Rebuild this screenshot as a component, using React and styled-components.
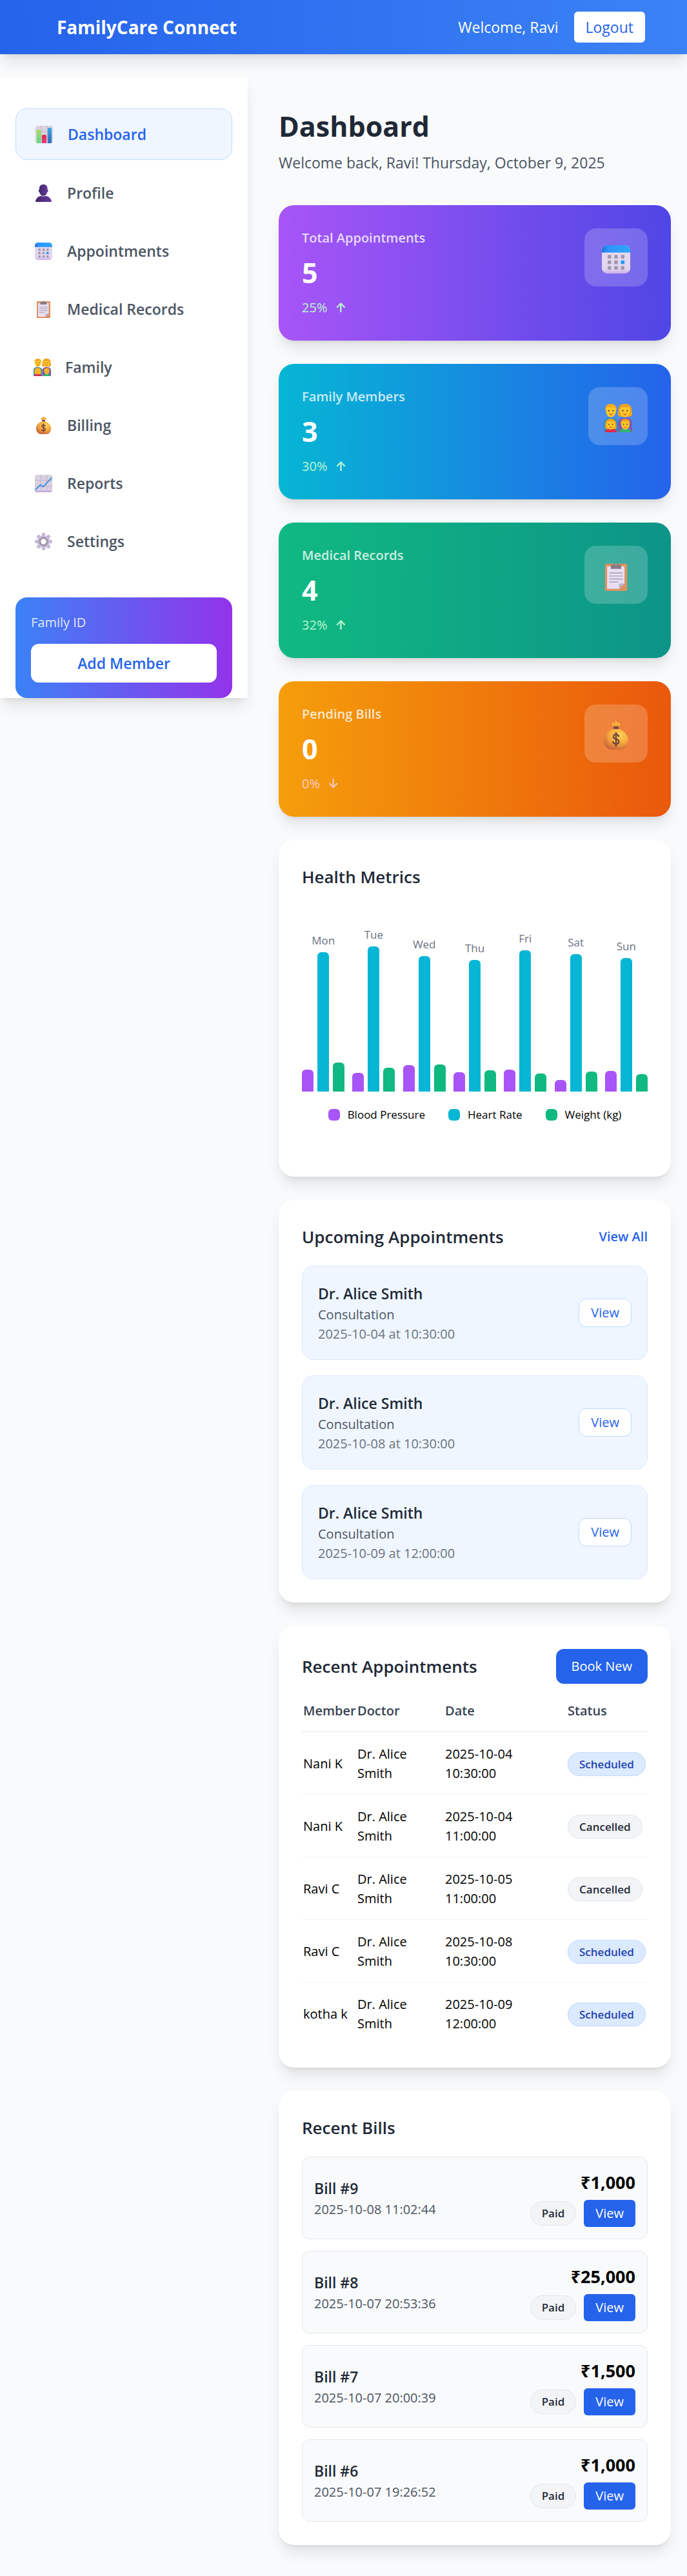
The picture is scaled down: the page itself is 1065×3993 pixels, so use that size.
import React, { useId } from "react";
import styled, { createGlobalStyle, css } from "styled-components";

const GlobalStyle = createGlobalStyle`
  *, *::before, *::after { box-sizing: border-box; }
  body {
    margin: 0;
    background: #f9fafb;
    color: #000;
    font-family: "Open Sans", "Noto Sans", sans-serif;
    font-size: 23px;
    line-height: 36px;
  }
  h1, h2, h3, p, ul { margin: 0; padding: 0; }
  ul { list-style: none; }
  button { font: inherit; border: 0; cursor: pointer; }
  a { text-decoration: none; }
`;

const shadow = css`
  box-shadow: 0 15px 22px -4px rgba(0, 0, 0, 0.1), 0 6px 9px -6px rgba(0, 0, 0, 0.1);
`;

/* ---------- icons ---------- */

const Svg = styled.svg`
  display: block;
  width: ${(p) => p.$size}px;
  height: ${(p) => p.$size}px;
`;

function ChartBarIcon({ size }) {
  const id = useId();
  return (
    <Svg $size={size} viewBox="0 0 27 27" aria-hidden="true">
      <defs>
        <linearGradient id={id + "g"} x2="0" y2="1"><stop stopColor="#a8e05f" /><stop offset="1" stopColor="#5fd98a" /></linearGradient>
        <linearGradient id={id + "p"} x2="0" y2="1"><stop stopColor="#d62a55" /><stop offset="1" stopColor="#f03a86" /></linearGradient>
        <linearGradient id={id + "b"} x2="0" y2="1"><stop stopColor="#3fa5e8" /><stop offset="1" stopColor="#2a6fbe" /></linearGradient>
      </defs>
      <rect width="27" height="27" rx="3" fill="#dad2de" />
      <path d="M9 0v27M18.500 0v27M0 8.500h27M0 18h27" stroke="#bfb6c6" strokeWidth="1" />
      <path d="M2 27V7.500a1.500 1.500 0 0 1 1.500-1.500h3.500a1.500 1.500 0 0 1 1.500 1.500V27z" fill={`url(#${id}g)`} />
      <path d="M10 27V15.500a1.500 1.500 0 0 1 1.500-1.500h4a1.500 1.500 0 0 1 1.500 1.500V27z" fill={`url(#${id}p)`} />
      <path d="M19 27V4.500a1.500 1.500 0 0 1 1.500-1.500h3a1.500 1.500 0 0 1 1.500 1.500V27z" fill={`url(#${id}b)`} />
    </Svg>
  );
}

function PersonIcon({ size }) {
  const id = useId();
  return (
    <Svg $size={size} viewBox="0 0 27 27" aria-hidden="true">
      <defs>
        <linearGradient id={id} x2="1" y2="0"><stop stopColor="#43276b" /><stop offset="1" stopColor="#63399b" /></linearGradient>
      </defs>
      <path d="M13.500 0c-4.500 0-6.500 2.400-6.500 6v2c-.9 0-1.300.7-1.300 1.700S6.300 11.500 7.100 11.500c.6 3.500 3 6.300 6.100 6.300s5.500-2.800 6.100-6.300c.8 0 1.400-.8 1.400-1.800S20.300 8 19.500 8V6c0-3.600-1.800-6-6-6z" fill={`url(#${id})`} />
      <path d="M1 27c.4-5.500 4.400-9.300 9-9.300 1.500 1 5 1 6.500 0 4.600 0 9 3.800 9.500 9.300z" fill={`url(#${id})`} />
    </Svg>
  );
}

function CalendarIcon({ size }) {
  const id = useId();
  const cells = [];
  for (let r = 0; r < 3; r += 1) {
    for (let c = 0; c < 3; c += 1) {
      cells.push(
        <rect key={`${r}${c}`} x={5.500 + c * 6.300} y={9.300 + r * 5.300} width="3.400" height="3.400" rx="0.400"
          fill={r === 1 && c === 2 ? "#2496f5" : "#9f97ae"} />
      );
    }
  }
  return (
    <Svg $size={size} viewBox="0 0 27 27" aria-hidden="true">
      <defs>
        <linearGradient id={id + "t"} x2="1" y2="0"><stop stopColor="#1f70dc" /><stop offset=".2" stopColor="#2d93fb" /><stop offset="1" stopColor="#2fa6fc" /></linearGradient>
        <linearGradient id={id + "b"} x2="0" y2="1"><stop stopColor="#e4dcec" /><stop offset=".85" stopColor="#e1d4ee" /><stop offset="1" stopColor="#cba9e4" /></linearGradient>
      </defs>
      <rect width="27" height="27" rx="5" fill={`url(#${id}b)`} />
      <path d="M0 7V5a5 5 0 0 1 5-5h17a5 5 0 0 1 5 5v2z" fill={`url(#${id}t)`} />
      {cells}
    </Svg>
  );
}

function ClipboardIcon({ size }) {
  return (
    <Svg $size={size} viewBox="0 0 27 27" aria-hidden="true">
      <rect x="3" y="1" width="21" height="26" rx="1" fill="#dd935f" />
      <path d="M5.500 3.500h16v16.500l-5 5h-11a.5.5 0 0 1-.5-.5V4a.5.500 0 0 1 .5-.5z" fill="#e9dff2" />
      <path d="M21.800 20h-4.500a1 1 0 0 0-1 1v4.200z" fill="#bfb2cf" />
      <path d="M8.500 6V3.300c0-.8.6-1.300 1.400-1.300h1.700a2 2 0 0 1 3.800 0H17c.8 0 1.400.5 1.400 1.300V6z" fill="#857b85" />
      <circle cx="13.500" cy="2.100" r=".8" fill="#dd935f" />
      <path d="M7 10h13M7 12.800h13M7 15.600h13M7 18.400h8.500" stroke="#a79cb2" strokeWidth=".9" />
    </Svg>
  );
}

function Face({ x, y, s, hair, long }) {
  return (
    <g transform={`translate(${x} ${y}) scale(${s})`}>
      {long && <path d="M-7 0c0-5 2.500-7.200 7-7.200s7 2.200 7 7.200c.8 3.500.3 6-2 6H-5c-2.300 0-2.800-2.500-2-6z" fill={hair} />}
      <path d="M-5.300-1c0-3 2-5 5.300-5s5.300 2 5.300 5c0 4-2 7.500-5.300 7.500S-5.300 3-5.300-1z" fill="#ffc928" />
      <path d="M-5.800-.5c-.6-4 1.600-6.700 5.800-6.700s6.400 2.700 5.800 6.700c-1-1.200-1.600-2.600-2-3.700-2.600.9-5.400.9-7.600 0-.4 1.100-1 2.500-2 3.700z" fill={hair} />
      <circle cx="-2.200" cy="-.2" r=".8" fill="#5b3a3c" />
      <circle cx="2.200" cy="-.2" r=".8" fill="#5b3a3c" />
      <path d="M-1.600 3c1 .8 2.200.8 3.200 0-.2 1.500-3 1.500-3.200 0z" fill="#d9304f" stroke="#d9304f" strokeWidth=".4" />
    </g>
  );
}

function FamilyIcon({ size }) {
  return (
    <Svg $size={size} viewBox="0 0 27 27" aria-hidden="true">
      <path d="M0 27V18c0-3 2-5 6-5s7.500 1.500 7.500 5v9z" fill="#2b8fc6" />
      <path d="M13.500 27v-9c0-3.500 3-5 7-5s6.500 2 6.500 5v9z" fill="#7d5ab0" />
      <Face x={6.800} y={6.700} s={0.920} hair="#f5a91c" />
      <Face x={20.200} y={6.700} s={0.920} hair="#f0a020" long />
      <path d="M1 27c.3-2.500 2.500-3.600 5.700-3.600s5.600 1.100 5.900 3.600z" fill="#e2284c" />
      <path d="M14.700 27c.3-2.500 2.500-3.600 5.700-3.600s5.400 1.100 5.700 3.600z" fill="#2fb573" />
      <Face x={6.600} y={19.600} s={0.740} hair="#f3a41c" long />
      <Face x={20.500} y={19.600} s={0.740} hair="#f0a020" />
    </Svg>
  );
}

function MoneyBagIcon({ size }) {
  const id = useId();
  return (
    <Svg $size={size} viewBox="0 0 27 27" aria-hidden="true">
      <defs>
        <radialGradient id={id} cx=".62" cy=".3" r=".75"><stop stopColor="#ffd858" /><stop offset=".55" stopColor="#f5a83c" /><stop offset="1" stopColor="#c9603c" /></radialGradient>
      </defs>
      <path d="M10.300 4.800C10 3.400 9 2.500 9.800 1.600c.7-.7 1.600.2 2.300-.6.500-.7.800-1 1.500-1s1 .3 1.500 1c.7.800 1.600-.1 2.300.6.800.9-.2 1.800-.5 3.200z" fill="#f5ad3d" />
      <path d="M10 7.500c-4.500 2-8 6-8 10.800C2 24 6 27 10 27h7.300c4 0 7.900-3 7.900-8.700 0-4.800-3.700-8.800-8.200-10.800z" fill={`url(#${id})`} />
      <rect x="11" y="4.800" width="5" height="2.600" rx=".6" fill="#7a4a44" />
      <path d="M16 14.300c-.4-1.200-1.300-1.800-2.500-1.800-1.500 0-2.500.8-2.500 2.200 0 3 5.200 1.600 5.200 4.700 0 1.500-1.200 2.300-2.700 2.300s-2.500-.8-2.900-2M13.500 11v12.800" fill="none" stroke="#75463f" strokeWidth="1.500" strokeLinecap="round" />
    </Svg>
  );
}

function ChartLineIcon({ size }) {
  const id = useId();
  return (
    <Svg $size={size} viewBox="0 0 27 27" aria-hidden="true">
      <defs>
        <linearGradient id={id} x2="0" y2="1"><stop stopColor="#d8d1de" /><stop offset=".88" stopColor="#dccfe6" /><stop offset="1" stopColor="#b597cf" /></linearGradient>
      </defs>
      <rect width="27" height="27" rx="3" fill={`url(#${id})`} />
      <path d="M9 0v27M18.500 0v27M0 8.500h27M0 18h27" stroke="#bfb6c6" strokeWidth="1" />
      <path d="M.5 23.500 8.700 15.500l4 3L26.500 4.500" fill="none" stroke="#3a95dc" strokeWidth="1.800" />
    </Svg>
  );
}

function GearIcon({ size }) {
  const teeth = [0, 45, 90, 135, 180, 225, 270, 315];
  return (
    <Svg $size={size} viewBox="0 0 27 27" aria-hidden="true">
      {teeth.map((a) => (
        <rect key={a} x="10.700" y="0" width="5.600" height="9" rx="2.200" fill="#c6b9d6" transform={`rotate(${a} 13.500 13.500)`} />
      ))}
      <circle cx="13.500" cy="13.500" r="9.600" fill="#c9bdd8" />
      <circle cx="13.500" cy="13.500" r="5.700" fill="#fff" stroke="#9f94a9" strokeWidth="3" />
    </Svg>
  );
}

/* ---------- header ---------- */

const Header = styled.header`
  display: flex;
  align-items: center;
  justify-content: space-between;
  padding: 18px 65px 18px 88px;
  background: linear-gradient(90deg, #2563eb, #3b82f6);
  color: #fff;
  ${shadow}
`;

const Brand = styled.div`
  font-size: 28px;
  line-height: 42px;
  font-weight: 700;
`;

const Account = styled.div`
  display: flex;
  align-items: center;
  gap: 24px;
`;

const LogoutButton = styled.button`
  padding: 6px 18px;
  border-radius: 6px;
  background: #fff;
  color: #2563eb;
`;

/* ---------- sidebar ---------- */

const Layout = styled.div`
  display: flex;
  align-items: flex-start;
`;

const Sidebar = styled.aside`
  flex: 0 0 384px;
  margin-top: 36px;
  padding: 48px 24px 0;
  background: #fff;
  ${shadow}
`;

const NavList = styled.ul`
  display: flex;
  flex-direction: column;
  gap: 12px;
`;

const NavLink = styled.a`
  display: flex;
  align-items: center;
  gap: 18px;
  padding: 18px 24px;
  border-radius: 18px;
  line-height: 42px;
  font-weight: 600;
  color: #4b5563;
  ${(p) => p.$active && css`
    border: 1px solid #bfdbfe;
    background: #eff6ff;
    color: #2563eb;
  `}
`;

const NavIcon = styled.span`
  display: flex;
  justify-content: center;
  width: ${(p) => (p.$narrow ? 35 : 38)}px;
`;

const FamilyBox = styled.section`
  display: flex;
  flex-direction: column;
  gap: 18px;
  margin-top: 48px;
  padding: 24px;
  border-radius: 18px;
  background: linear-gradient(90deg, #3b82f6, #9333ea);
`;

const FamilyLabel = styled.p`
  font-size: 20px;
  line-height: 30px;
  color: rgba(255, 255, 255, 0.85);
`;

const AddButton = styled.button`
  padding: 12px;
  border-radius: 12px;
  background: #fff;
  color: #2563eb;
  font-weight: 600;
`;

/* ---------- main ---------- */

const Main = styled.main`
  flex: 1;
  min-width: 0;
  display: flex;
  flex-direction: column;
  gap: 48px;
  padding: 84px 25px 48px 48px;
`;

const PageHead = styled.div`
  display: flex;
  flex-direction: column;
  gap: 10px;
`;

const PageTitle = styled.h1`
  font-size: 43px;
  line-height: 56px;
  font-weight: 700;
  color: #1f2937;
`;

const PageSubtitle = styled.p`
  color: #4b5563;
`;

const Stack = styled.div`
  display: flex;
  flex-direction: column;
  gap: 36px;
`;

const StatCard = styled.section`
  display: flex;
  justify-content: space-between;
  align-items: flex-start;
  padding: 36px;
  border-radius: 24px;
  background: linear-gradient(90deg, ${(p) => p.$from}, ${(p) => p.$to});
  color: #fff;
  ${shadow}
`;

const StatInfo = styled.div`
  display: flex;
  flex-direction: column;
  gap: 12px;
`;

const StatLabel = styled.h3`
  font-size: 20px;
  line-height: 30px;
  font-weight: 600;
  color: rgba(255, 255, 255, 0.8);
`;

const StatValue = styled.p`
  font-size: 43px;
  line-height: 54px;
  font-weight: 700;
`;

const Trend = styled.p`
  display: flex;
  gap: 12px;
  font-size: 20px;
  line-height: 30px;
  color: ${(p) => (p.$down ? "#fecaca" : "#bbf7d0")};
`;

const Arrow = styled.span`
  font-family: Inter, sans-serif;
  font-weight: 600;
`;

const StatIcon = styled.div`
  display: flex;
  align-items: center;
  justify-content: center;
  width: ${(p) => (p.$narrow ? 92 : 98)}px;
  height: 90px;
  padding-top: 6px;
  border-radius: 18px;
  background: rgba(255, 255, 255, 0.2);
`;

const Card = styled.section`
  padding: 36px;
  border-radius: 24px;
  background: #fff;
  ${shadow}
`;

const CardHead = styled.div`
  display: flex;
  align-items: center;
  justify-content: space-between;
  margin-bottom: 24px;
`;

const CardTitle = styled.h2`
  font-size: 26px;
  line-height: 42px;
  font-weight: 600;
  color: #1f2937;
`;

/* ---------- chart ---------- */

const Chart = styled.div`
  height: 384px;
`;

const Plot = styled.div`
  display: flex;
  align-items: flex-end;
  gap: 12px;
  height: 288px;
`;

const Day = styled.div`
  flex: 1;
  display: flex;
  flex-direction: column;
  align-items: center;
  gap: 6px;
  font-size: 17px;
  line-height: 24px;
  color: #6b7280;
`;

const Bars = styled.div`
  display: flex;
  align-items: flex-end;
  gap: 6px;
`;

const Bar = styled.div`
  width: 18px;
  border-radius: 6px 6px 0 0;
  background: ${(p) => p.$color};
`;

const Legend = styled.ul`
  display: flex;
  justify-content: center;
  gap: 36px;
  margin-top: 24px;
  font-size: 17px;
  line-height: 24px;
`;

const LegendItem = styled.li`
  display: flex;
  align-items: center;
  gap: 12px;
  &::before {
    content: "";
    width: 18px;
    height: 18px;
    border-radius: 6px;
    background: ${(p) => p.$color};
  }
`;

/* ---------- appointments ---------- */

const TextLink = styled.a`
  font-size: 20px;
  line-height: 30px;
  font-weight: 600;
  color: #2563eb;
`;

const RowList = styled.ul`
  display: flex;
  flex-direction: column;
  gap: ${(p) => p.$gap}px;
`;

const VisitRow = styled.li`
  display: flex;
  align-items: center;
  justify-content: space-between;
  padding: 24px;
  border: 1px solid #dbeafe;
  border-radius: 18px;
  background: #eff6ff;
`;

const RowTitle = styled.h3`
  font-size: 23px;
  line-height: 36px;
  font-weight: 600;
  color: #1f2937;
`;

const RowText = styled.p`
  font-size: 20px;
  line-height: 30px;
  color: ${(p) => (p.$muted ? "#6b7280" : "#4b5563")};
`;

const OutlineButton = styled.button`
  padding: 6px 18px;
  border: 1px solid #bfdbfe;
  border-radius: 12px;
  background: #fff;
  color: #2563eb;
  font-size: 20px;
  line-height: 30px;
`;

const SolidButton = styled.button`
  padding: ${(p) => (p.$small ? "6px 18px" : "12px 24px")};
  border-radius: ${(p) => (p.$small ? 6 : 12)}px;
  background: #2563eb;
  color: #fff;
  font-size: 20px;
  line-height: 30px;
`;

const Table = styled.table`
  width: 100%;
  table-layout: fixed;
  border-collapse: collapse;
  font-size: 20px;
  line-height: 30px;
  th {
    padding: 3px 0 17px 2px;
    border-bottom: 1px solid #e5e7eb;
    text-align: left;
    font-weight: 600;
    color: #374151;
  }
  td {
    padding: 19px 2px 17px;
    border-bottom: 1px solid #f3f4f6;
  }
  tr:last-child td { border-bottom: 0; }
`;

const Col = styled.col`
  width: ${(p) => p.$width};
`;

const Badge = styled.span`
  padding: 6px 17px;
  border: 1px solid ${(p) => (p.$info ? "#bfdbfe" : "#e5e7eb")};
  border-radius: 999px;
  background: ${(p) => (p.$info ? "#dbeafe" : "#f3f4f6")};
  color: ${(p) => (p.$info ? "#1e40af" : "#1f2937")};
  font-size: 17px;
  line-height: 24px;
  font-weight: 600;
`;

/* ---------- bills ---------- */

const BillRow = styled.li`
  display: flex;
  align-items: center;
  justify-content: space-between;
  padding: 18px;
  border: 1px solid #e5e7eb;
  border-radius: 12px;
  background: #f9fafb;
`;

const BillSide = styled.div`
  display: flex;
  flex-direction: column;
  align-items: flex-end;
  gap: 6px;
`;

const Amount = styled.p`
  font-size: 27px;
  line-height: 42px;
  font-weight: 700;
`;

const BillActions = styled.div`
  display: flex;
  align-items: center;
  gap: 12px;
`;

/* ---------- data ---------- */

const nav = [
  { label: "Dashboard", Icon: ChartBarIcon, active: true },
  { label: "Profile", Icon: PersonIcon },
  { label: "Appointments", Icon: CalendarIcon },
  { label: "Medical Records", Icon: ClipboardIcon },
  { label: "Family", Icon: FamilyIcon, narrow: true },
  { label: "Billing", Icon: MoneyBagIcon },
  { label: "Reports", Icon: ChartLineIcon },
  { label: "Settings", Icon: GearIcon },
];

const stats = [
  { label: "Total Appointments", value: 5, trend: 25, Icon: CalendarIcon, from: "#a855f7", to: "#4f46e5" },
  { label: "Family Members", value: 3, trend: 30, Icon: FamilyIcon, from: "#06b6d4", to: "#2563eb", narrow: true },
  { label: "Medical Records", value: 4, trend: 32, Icon: ClipboardIcon, from: "#10b981", to: "#0d9488" },
  { label: "Pending Bills", value: 0, trend: 0, Icon: MoneyBagIcon, from: "#f59e0b", to: "#ea580c", down: true },
];

const series = [
  { label: "Blood Pressure", color: "#a855f7" },
  { label: "Heart Rate", color: "#06b6d4" },
  { label: "Weight (kg)", color: "#10b981" },
];

const days = [
  { label: "Mon", values: [34, 216, 45] },
  { label: "Tue", values: [29, 225, 37] },
  { label: "Wed", values: [41, 210, 42] },
  { label: "Thu", values: [30, 204, 33] },
  { label: "Fri", values: [34, 219, 28] },
  { label: "Sat", values: [18, 213, 31] },
  { label: "Sun", values: [32, 207, 27] },
];

const upcoming = ["2025-10-04 at 10:30:00", "2025-10-08 at 10:30:00", "2025-10-09 at 12:00:00"];

const recent = [
  { member: "Nani K", date: "2025-10-04", time: "10:30:00", status: "Scheduled" },
  { member: "Nani K", date: "2025-10-04", time: "11:00:00", status: "Cancelled" },
  { member: "Ravi C", date: "2025-10-05", time: "11:00:00", status: "Cancelled" },
  { member: "Ravi C", date: "2025-10-08", time: "10:30:00", status: "Scheduled" },
  { member: "kotha k", date: "2025-10-09", time: "12:00:00", status: "Scheduled" },
];

const bills = [
  { id: 9, date: "2025-10-08 11:02:44", amount: "₹1,000" },
  { id: 8, date: "2025-10-07 20:53:36", amount: "₹25,000" },
  { id: 7, date: "2025-10-07 20:00:39", amount: "₹1,500" },
  { id: 6, date: "2025-10-07 19:26:52", amount: "₹1,000" },
];

export default function App() {
  return (
    <>
      <GlobalStyle />
      <Header>
        <Brand>FamilyCare Connect</Brand>
        <Account>
          <span>Welcome, Ravi</span>
          <LogoutButton type="button">Logout</LogoutButton>
        </Account>
      </Header>
      <Layout>
        <Sidebar>
          <nav>
            <NavList>
              {nav.map(({ label, Icon, active, narrow }) => (
                <li key={label}>
                  <NavLink href="#" $active={active}>
                    <NavIcon $narrow={narrow}><Icon size={27} /></NavIcon>
                    {label}
                  </NavLink>
                </li>
              ))}
            </NavList>
          </nav>
          <FamilyBox>
            <FamilyLabel>Family ID</FamilyLabel>
            <AddButton type="button">Add Member</AddButton>
          </FamilyBox>
        </Sidebar>
        <Main>
          <PageHead>
            <PageTitle>Dashboard</PageTitle>
            <PageSubtitle>Welcome back, Ravi! Thursday, October 9, 2025</PageSubtitle>
          </PageHead>
          <Stack>
            {stats.map(({ label, value, trend, Icon, from, to, narrow, down }) => (
              <StatCard key={label} $from={from} $to={to}>
                <StatInfo>
                  <StatLabel>{label}</StatLabel>
                  <StatValue>{value}</StatValue>
                  <Trend $down={down}>{trend}% <Arrow>{down ? "↓" : "↑"}</Arrow></Trend>
                </StatInfo>
                <StatIcon $narrow={narrow}><Icon size={44} /></StatIcon>
              </StatCard>
            ))}

            <Card>
              <CardHead><CardTitle>Health Metrics</CardTitle></CardHead>
              <Chart>
                <Plot>
                  {days.map((d) => (
                    <Day key={d.label}>
                      {d.label}
                      <Bars>
                        {d.values.map((v, i) => (
                          <Bar key={series[i].label} $color={series[i].color} style={{ height: v }} />
                        ))}
                      </Bars>
                    </Day>
                  ))}
                </Plot>
                <Legend>
                  {series.map((s) => <LegendItem key={s.label} $color={s.color}>{s.label}</LegendItem>)}
                </Legend>
              </Chart>
            </Card>

            <Card>
              <CardHead>
                <CardTitle>Upcoming Appointments</CardTitle>
                <TextLink href="#">View All</TextLink>
              </CardHead>
              <RowList $gap={24}>
                {upcoming.map((when) => (
                  <VisitRow key={when}>
                    <div>
                      <RowTitle>Dr. Alice Smith</RowTitle>
                      <RowText>Consultation</RowText>
                      <RowText $muted>{when}</RowText>
                    </div>
                    <OutlineButton type="button">View</OutlineButton>
                  </VisitRow>
                ))}
              </RowList>
            </Card>

            <Card>
              <CardHead>
                <CardTitle>Recent Appointments</CardTitle>
                <SolidButton type="button">Book New</SolidButton>
              </CardHead>
              <Table>
                <colgroup>
                  <Col $width="84px" />
                  <Col $width="136px" />
                  <Col $width="auto" />
                  <Col $width="126px" />
                </colgroup>
                <thead>
                  <tr>
                    <th scope="col">Member</th>
                    <th scope="col">Doctor</th>
                    <th scope="col">Date</th>
                    <th scope="col">Status</th>
                  </tr>
                </thead>
                <tbody>
                  {recent.map((r) => (
                    <tr key={r.member + r.date + r.time}>
                      <td>{r.member}</td>
                      <td>Dr. Alice Smith</td>
                      <td>{r.date} {r.time}</td>
                      <td><Badge $info={r.status === "Scheduled"}>{r.status}</Badge></td>
                    </tr>
                  ))}
                </tbody>
              </Table>
            </Card>

            <Card>
              <CardHead><CardTitle>Recent Bills</CardTitle></CardHead>
              <RowList $gap={18}>
                {bills.map((b) => (
                  <BillRow key={b.id}>
                    <div>
                      <RowTitle>Bill #{b.id}</RowTitle>
                      <RowText>{b.date}</RowText>
                    </div>
                    <BillSide>
                      <Amount>{b.amount}</Amount>
                      <BillActions>
                        <Badge>Paid</Badge>
                        <SolidButton type="button" $small>View</SolidButton>
                      </BillActions>
                    </BillSide>
                  </BillRow>
                ))}
              </RowList>
            </Card>
          </Stack>
        </Main>
      </Layout>
    </>
  );
}
